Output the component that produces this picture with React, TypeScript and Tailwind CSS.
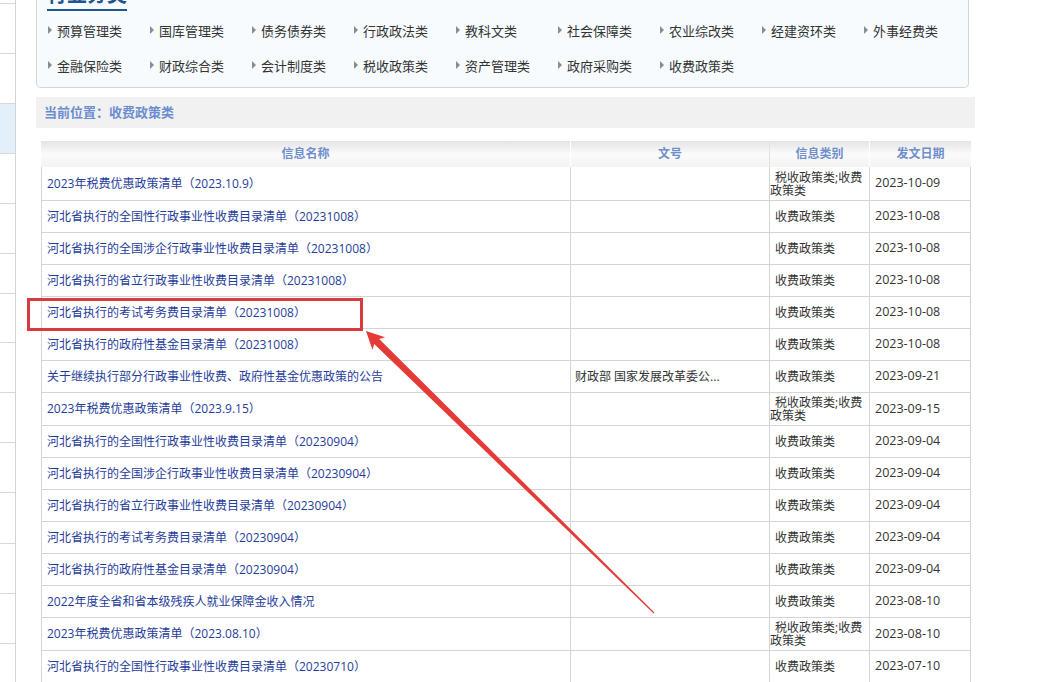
import React from "react";

const cats1 = ["预算管理类", "国库管理类", "债务债券类", "行政政法类", "教科文类", "社会保障类", "农业综改类", "经建资环类", "外事经费类"];
const cats2 = ["金融保险类", "财政综合类", "会计制度类", "税收政策类", "资产管理类", "政府采购类", "收费政策类"];

const sideItems = [
  "h-[4px]",
  "h-[50px]",
  "h-[50px]",
  "h-[50px] bg-[#e3eff9]",
  "h-[50px]",
  "h-[50px]",
  "h-[40px]",
  "h-[49px]",
  "h-[50px]",
  "h-[50px]",
  "h-[50px]",
  "h-[51px]",
  "h-[50px]",
  "h-[50px]",
];

type Row = { name: string; wh: string; multi: boolean; date: string };
const M = true;
const S = false;
const rows: Row[] = [
  { name: "2023年税费优惠政策清单（2023.10.9）", wh: "", multi: M, date: "2023-10-09" },
  { name: "河北省执行的全国性行政事业性收费目录清单（20231008）", wh: "", multi: S, date: "2023-10-08" },
  { name: "河北省执行的全国涉企行政事业性收费目录清单（20231008）", wh: "", multi: S, date: "2023-10-08" },
  { name: "河北省执行的省立行政事业性收费目录清单（20231008）", wh: "", multi: S, date: "2023-10-08" },
  { name: "河北省执行的考试考务费目录清单（20231008）", wh: "", multi: S, date: "2023-10-08" },
  { name: "河北省执行的政府性基金目录清单（20231008）", wh: "", multi: S, date: "2023-10-08" },
  { name: "关于继续执行部分行政事业性收费、政府性基金优惠政策的公告", wh: "财政部 国家发展改革委公...", multi: S, date: "2023-09-21" },
  { name: "2023年税费优惠政策清单（2023.9.15）", wh: "", multi: M, date: "2023-09-15" },
  { name: "河北省执行的全国性行政事业性收费目录清单（20230904）", wh: "", multi: S, date: "2023-09-04" },
  { name: "河北省执行的全国涉企行政事业性收费目录清单（20230904）", wh: "", multi: S, date: "2023-09-04" },
  { name: "河北省执行的省立行政事业性收费目录清单（20230904）", wh: "", multi: S, date: "2023-09-04" },
  { name: "河北省执行的考试考务费目录清单（20230904）", wh: "", multi: S, date: "2023-09-04" },
  { name: "河北省执行的政府性基金目录清单（20230904）", wh: "", multi: S, date: "2023-09-04" },
  { name: "2022年度全省和省本级残疾人就业保障金收入情况", wh: "", multi: S, date: "2023-08-10" },
  { name: "2023年税费优惠政策清单（2023.08.10）", wh: "", multi: M, date: "2023-08-10" },
  { name: "河北省执行的全国性行政事业性收费目录清单（20230710）", wh: "", multi: S, date: "2023-07-10" },
];

function Cat({ t }: { t: string }) {
  return (
    <div className="flex h-[35px] items-center gap-[5px] text-[13px] text-[#333]">
      <span className="mb-[3px] h-0 w-0 border-y-[4px] border-l-[4px] border-y-transparent border-l-[#8c8c8c]" />
      <span>{t}</span>
    </div>
  );
}

export default function App() {
  return (
    <div className="relative flex h-[682px] w-[1049px] overflow-hidden bg-white font-['Open_Sans','Noto_Sans_CJK_SC',sans-serif] text-[12px]">
      <aside className="flex w-[16px] shrink-0 flex-col border-r border-[#d4d4d4]">
        {sideItems.map((c, i) => (
          <div key={i} className={`${c} shrink-0 border-b border-[#d9d9d9]`} />
        ))}
      </aside>

      <main className="flex-1 pl-[20px]">
        <div className="flow-root">
          <section className="flow-root h-[88px] w-[933px] rounded-b-[5px] border-x border-b border-[#cfd6dd] bg-[#f7fbfe]">
            <div className="-mt-[15px] ml-[10px] w-fit border-b-2 border-[#1f5590] pb-[4px] text-[20px] leading-[20px] font-bold text-[#1f5590]">
              行业分类
            </div>
            <div className="mt-[3px] grid grid-cols-[repeat(9,102px)] pl-[11px]">
              {cats1.map((t) => (
                <Cat key={t} t={t} />
              ))}
              {cats2.map((t) => (
                <Cat key={t + "2"} t={t} />
              ))}
            </div>
          </section>
        </div>

        <div className="mt-[9px] flex h-[31px] w-[939px] items-center bg-[#f1f1f1] pl-[8px] text-[13px] font-bold text-[#6b8dcf]">
          当前位置：收费政策类
        </div>

        <div className="ml-[5px] mt-[13px] w-[930px]">
          <div className="grid h-[26px] grid-cols-[529px_199px_100px_102px] bg-linear-to-b from-[#e4e4e4] via-[#fbfbfb] to-[#f3f3f3] text-center font-bold text-[#6f8ecb]">
            <div className="flex items-center justify-center">信息名称</div>
            <div className="flex items-center justify-center border-l border-white">文号</div>
            <div className="flex items-center justify-center border-l border-[#e2e2e2]">信息类别</div>
            <div className="flex items-center justify-center border-l border-white">发文日期</div>
          </div>
          {rows.map((r, i) => (
            <div
              key={i}
              className={`grid grid-cols-[529px_199px_100px_102px] border-b border-[#d5d5d5] ${
                i === 0 ? "h-[34px]" : r.multi ? "h-[33px]" : "h-[32px]"
              }`}
            >
              <div className="flex items-center whitespace-nowrap border-l border-[#d5d5d5] pl-[5px] text-[#1f3d9b]">{r.name}</div>
              <div className="flex items-center whitespace-nowrap border-l border-[#d5d5d5] pl-[4px] text-[#333]">{r.wh}</div>
              <div className="flex items-center border-l border-[#d5d5d5] text-[#333]">
                <div className="indent-[5px] leading-[13px]">{r.multi ? "税收政策类;收费政策类" : "收费政策类"}</div>
              </div>
              <div className="flex items-center border-x border-[#d5d5d5] pl-[5px] text-[12.5px] text-[#333]">{r.date}</div>
            </div>
          ))}
        </div>
      </main>

      <div className="pointer-events-none absolute left-[27px] top-[298px] h-[33px] w-[336px] border-[3px] border-[#d93a40]" />
      <svg className="pointer-events-none absolute left-0 top-0" width="1049" height="682" viewBox="0 0 1049 682">
        <polygon
          points="366,331 372.5,350 374.2,344 653.6,613.4 654.4,612.6 379.2,339 385.1,337.2"
          fill="#e53b37"
        />
      </svg>
    </div>
  );
}
